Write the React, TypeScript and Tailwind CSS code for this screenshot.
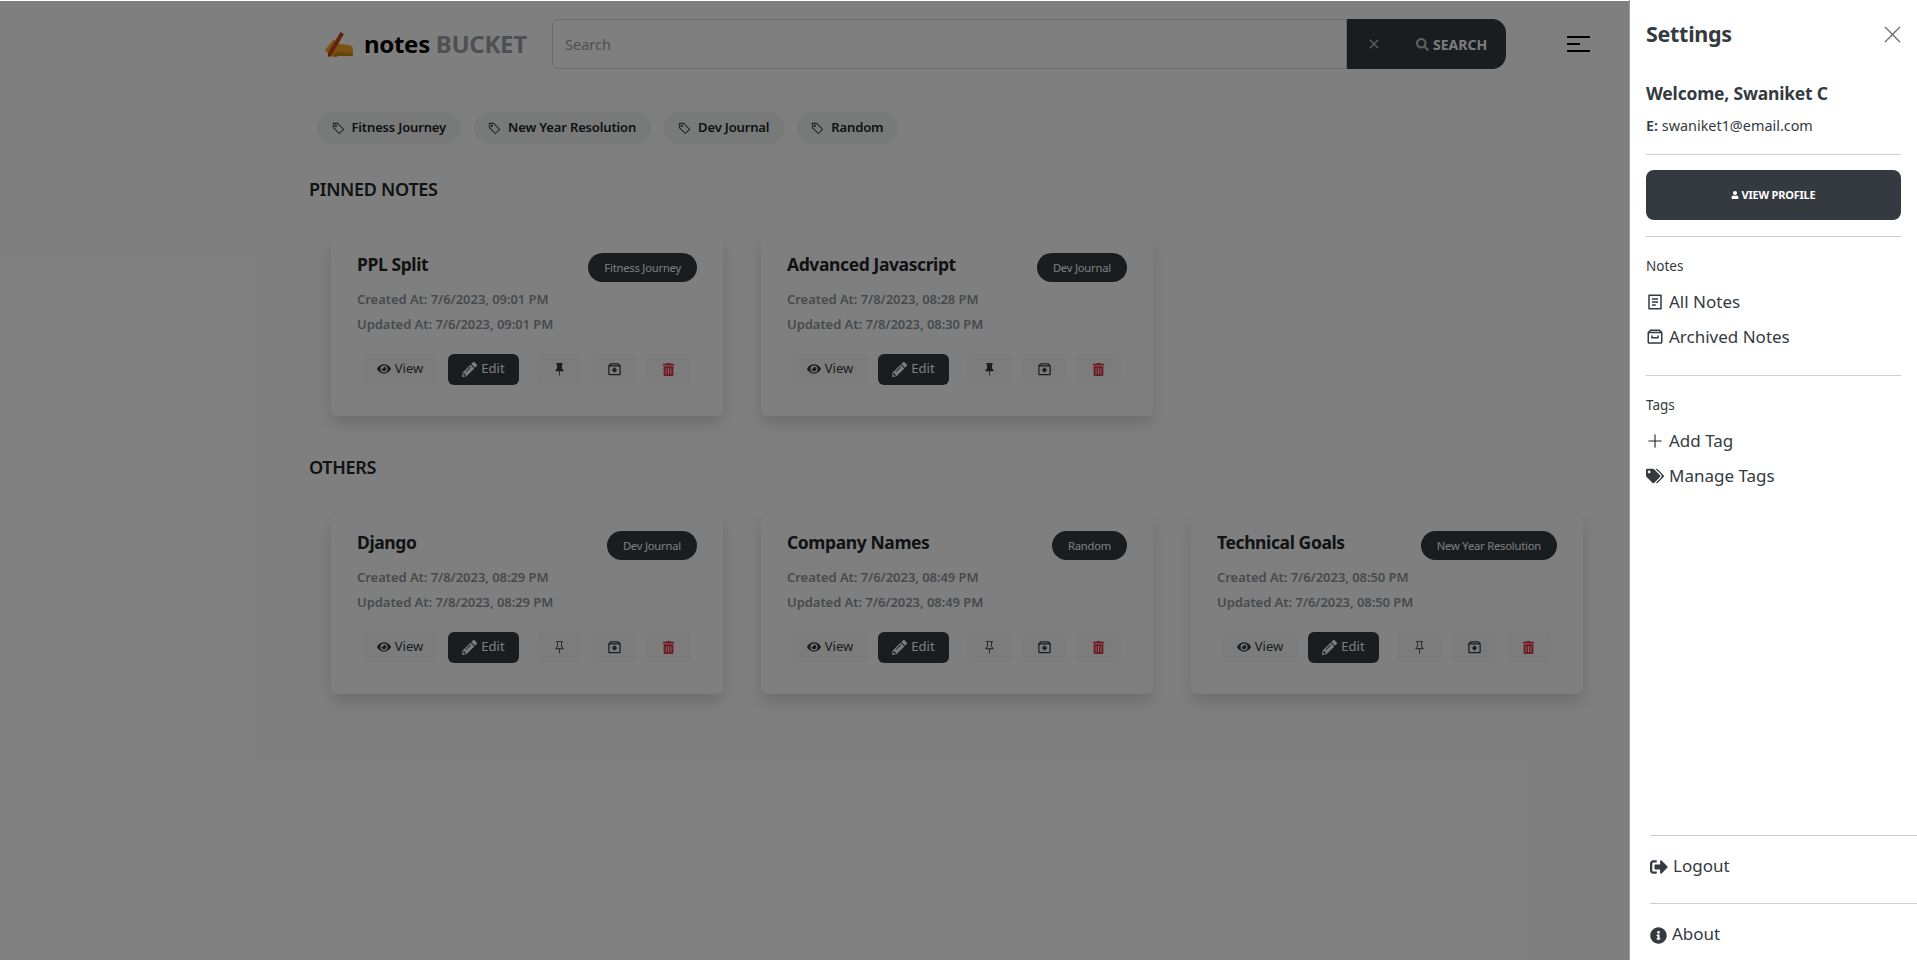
import React from 'react';
import { BsPinFill, BsPin, BsTag, BsPlusLg, BsXLg, BsX } from 'react-icons/bs';
import { BiArchiveIn, BiArchive } from 'react-icons/bi';
import { RiFileList2Line } from 'react-icons/ri';
import { FaEye, FaPencilAlt, FaTrashAlt, FaUser, FaSearch, FaTags, FaSignOutAlt, FaInfoCircle } from 'react-icons/fa';

const font = "font-['Noto_Sans','Open_Sans',sans-serif]";

const tags = ['Fitness Journey', 'New Year Resolution', 'Dev Journal', 'Random'];

const pinned = [
  { title: 'PPL Split', tag: 'Fitness Journey', created: '7/6/2023, 09:01 PM', updated: '7/6/2023, 09:01 PM' },
  { title: 'Advanced Javascript', tag: 'Dev Journal', created: '7/8/2023, 08:28 PM', updated: '7/8/2023, 08:30 PM' },
];

const others = [
  { title: 'Django', tag: 'Dev Journal', created: '7/8/2023, 08:29 PM', updated: '7/8/2023, 08:29 PM' },
  { title: 'Company Names', tag: 'Random', created: '7/6/2023, 08:49 PM', updated: '7/6/2023, 08:49 PM' },
  { title: 'Technical Goals', tag: 'New Year Resolution', created: '7/6/2023, 08:50 PM', updated: '7/6/2023, 08:50 PM' },
];

interface NoteProps {
  note: { title: string; tag: string; created: string; updated: string };
  isPinned?: boolean;
}

const NoteCard: React.FC<NoteProps> = ({ note, isPinned }) => (
  <div className="w-[392px] h-[179px] bg-white rounded-md shadow-[0_8px_16px_rgba(0,0,0,0.15)] pt-[16px] pl-[26px] pr-[26px]">
    <div className="flex justify-between items-start">
      <div className="text-[17.5px] leading-[24px] font-bold text-[#212529] tracking-[-0.4px] -mt-px">{note.title}</div>
      <span className="h-[29px] px-4 pt-px rounded-full bg-[#343a40] text-[#f8f9fa] text-[11.2px] tracking-[-0.2px] flex items-center">{note.tag}</span>
    </div>
    <div className="mt-[5px] text-[13px] leading-[25px] font-semibold text-[#8f9499] tracking-[-0.05px]">
      <div>Created At: {note.created}</div>
      <div>Updated At: {note.updated}</div>
    </div>
    <div className="mt-[16px] flex items-center pl-[5px] text-[13px]">
      <button className="w-[76px] h-[32px] rounded-md bg-[#f8f9fa] text-[#343a40] flex items-center justify-center gap-[4px]">
        <FaEye size={14} /> View
      </button>
      <button className="ml-[10px] w-[71px] h-[31px] rounded-md bg-[#343a40] text-[#f8f9fa] flex items-center justify-center gap-[4px]">
        <FaPencilAlt size={15} /> Edit
      </button>
      <button className="ml-[18px] w-[45px] h-[32px] rounded-md bg-[#f8f9fa] text-[#343a40] flex items-center justify-center">
        {isPinned ? <BsPinFill size={13} /> : <BsPin size={13} />}
      </button>
      <button className="ml-[10px] w-[44px] h-[32px] rounded-md bg-[#f8f9fa] text-[#343a40] flex items-center justify-center">
        <BiArchiveIn size={15} />
      </button>
      <button className="ml-[10px] w-[45px] h-[32px] rounded-md bg-[#f8f9fa] text-[#dc3545] flex items-center justify-center">
        <FaTrashAlt size={13} />
      </button>
    </div>
  </div>
);

const LogoHand = () => (
  <svg width="28" height="27" viewBox="0 0 28 27" className="shrink-0">
    <path d="M0 19 L8 9 L13 10 L14 13 L24 14 Q28 15 28 19 L28 25 L14 25 L9 26 L5 25 Z" fill="#f5a623" />
    <path d="M9 22 Q18 20 28 23 L28 25 L14 25 L9 26 Z" fill="#cf8a12" />
    <path d="M15.5 1 L19 3 L6 25 L3 26 L3 22 Z" fill="#c1441c" />
  </svg>
);

export default function App() {
  return (
    <div className={`${font} relative flex w-full h-[960px] overflow-hidden bg-white`}>
      <main className="relative flex-1 min-w-0 pl-[309px] pt-[19px]">
        <div className="flex items-center h-[50px]">
          <div className="w-[243px] shrink-0 pl-[16px] flex items-center gap-[11px] text-[24px] font-bold tracking-[-0.3px] whitespace-nowrap">
            <LogoHand />
            <span className="text-black">notes <span className="text-[#9a9fa6]">BUCKET</span></span>
          </div>
          <div className="w-[795px] h-[50px] border border-[#ced4da] rounded-l-md flex items-center px-3 text-[14.5px] leading-[22px] text-[#9a9fa6]">Search</div>
          <div className="w-[159px] h-[50px] bg-[#343a40] rounded-r-[14px] flex items-center text-[#f8f9fa]">
            <BsX size={20} className="ml-[17px] opacity-70" />
            <span className="ml-[32px] flex items-center gap-[4px] text-[14px] font-bold">
              <FaSearch size={13} className="opacity-70" /> SEARCH
            </span>
          </div>
          <div className="ml-[61px] w-[23px] flex flex-col gap-[5px]">
            <span className="h-[2px] w-full bg-black" />
            <span className="h-[2px] w-[13px] bg-black" />
            <span className="h-[2px] w-full bg-black" />
          </div>
        </div>

        <div className="mt-[43px] pl-[8px] flex gap-[13px]">
          {tags.map((t) => (
            <span key={t} className="h-[32px] px-[14.5px] rounded-full bg-[#f0f2f2] text-[#212529] text-[13px] font-semibold tracking-[-0.15px] flex items-center gap-[7px]">
              <BsTag size={13} /> {t}
            </span>
          ))}
        </div>

        <h2 className="mt-[31px] text-[18px] leading-[28px] font-semibold text-[#212529] tracking-[-0.3px]">PINNED NOTES</h2>
        <div className="mt-[34px] pl-[22px] flex gap-[38px]">
          {pinned.map((n) => <NoteCard key={n.title} note={n} isPinned />)}
        </div>

        <h2 className="mt-[37px] text-[18px] leading-[28px] font-semibold text-[#212529] tracking-[-0.3px]">OTHERS</h2>
        <div className="mt-[34px] pl-[22px] flex gap-[38px]">
          {others.map((n) => <NoteCard key={n.title} note={n} />)}
        </div>

        <div className="absolute inset-0 top-px bg-black/50" />
      </main>

      <aside className="w-[288px] shrink-0 bg-white border-l border-[#9a9a9a] pl-[16px] pr-[16px] pt-px flex flex-col text-[#343a40]">
        <div className="flex items-center justify-between h-[66px]">
          <h3 className="text-[21.5px] font-bold tracking-[-0.3px]">Settings</h3>
          <BsXLg size={21} className="text-[#6c6c6c] -mr-[2px]" />
        </div>
        <div className="mt-[14px] text-[17.5px] font-bold tracking-[-0.2px] leading-[24px]">Welcome, Swaniket C</div>
        <div className="mt-[11px] text-[14.4px] leading-[20px]"><b className="font-semibold">E:</b> swaniket1@email.com</div>
        <hr className="mt-[18px] border-[#cfcfcf]" />
        <button className="mt-[15px] h-[50px] rounded-lg bg-[#343a40] text-white text-[11px] font-bold tracking-[-0.2px] flex items-center justify-center gap-[2px]">
          <FaUser size={8} /> VIEW PROFILE
        </button>
        <hr className="mt-[16px] border-[#cfcfcf]" />
        <div className="mt-[19px] text-[13.5px] leading-[20px]">Notes</div>
        <div className="mt-[8px] flex flex-col text-[17px] leading-[35px]">
          <div className="flex items-center gap-[5px]"><RiFileList2Line size={18} />All Notes</div>
          <div className="flex items-center gap-[5px]"><BiArchive size={18} />Archived Notes</div>
        </div>
        <hr className="mt-[21px] border-[#cfcfcf]" />
        <div className="mt-[19px] text-[13.5px] leading-[20px]">Tags</div>
        <div className="mt-[8px] flex flex-col text-[17px] leading-[35px]">
          <div className="flex items-center gap-[5px]"><BsPlusLg size={18} className="text-[#212529]" />Add Tag</div>
          <div className="flex items-center gap-[5px]"><FaTags size={18} />Manage Tags</div>
        </div>
        <div className="mt-auto -mr-[16px] pl-[4px] text-[17px]">
          <hr className="border-[#cfcfcf]" />
          <div className="h-[67px] pt-[15px] flex items-start gap-[5px] leading-[30px]"><FaSignOutAlt size={18} className="mt-[7px]" />Logout</div>
          <hr className="border-[#cfcfcf]" />
          <div className="h-[56px] pt-[15px] flex items-start gap-[5px] leading-[30px]"><FaInfoCircle size={17} className="mt-[8px]" />About</div>
        </div>
      </aside>
    </div>
  );
}
